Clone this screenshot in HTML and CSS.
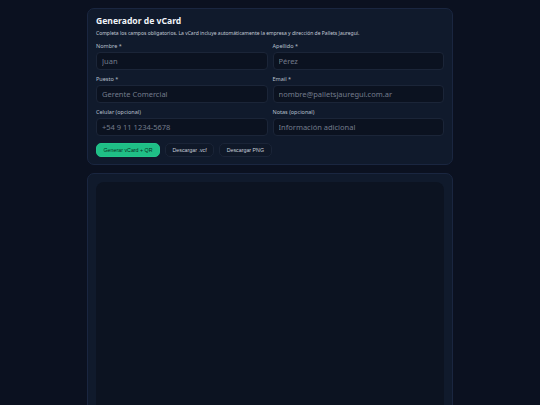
FILE: index.html
```html
<!DOCTYPE html>
<html lang="es">
<head>
<meta charset="utf-8">
<title>Generador de vCard</title>
<link rel="stylesheet" href="styles.css">
</head>
<body>
<main class="wrap">
  <section class="card form-card">
    <h1 class="title">Generador de vCard</h1>
    <p class="desc">Completa los campos obligatorios. La vCard incluye automáticamente la empresa y dirección de Pallets Jauregui.</p>
    <div class="grid">
      <label class="field"><span class="lbl">Nombre *</span><input class="inp" placeholder="Juan"></label>
      <label class="field"><span class="lbl">Apellido *</span><input class="inp" placeholder="Pérez"></label>
      <label class="field"><span class="lbl">Puesto *</span><input class="inp" placeholder="Gerente Comercial"></label>
      <label class="field"><span class="lbl">Email *</span><input class="inp" placeholder="nombre@palletsjauregui.com.ar"></label>
      <label class="field"><span class="lbl">Celular (opcional)</span><input class="inp" placeholder="+54 9 11 1234-5678"></label>
      <label class="field"><span class="lbl">Notas (opcional)</span><input class="inp" placeholder="Información adicional"></label>
    </div>
    <div class="actions">
      <button class="btn btn-primary">Generar vCard + QR</button>
      <button class="btn btn-ghost">Descargar .vcf</button>
      <button class="btn btn-ghost">Descargar PNG</button>
    </div>
  </section>
  <section class="card out-card">
    <div class="canvas"></div>
  </section>
</main>
</body>
</html>
```

FILE: styles.css
```css
* { box-sizing: border-box; }
html, body { margin: 0; padding: 0; }
body {
  background: #0b1120;
  font-family: "Noto Sans", "Open Sans", sans-serif;
  color: #e5e9f0;
}
.wrap {
  width: 366px;
  margin: 0 auto;
  padding-top: 8px;
  display: flex;
  flex-direction: column;
  gap: 8px;
}
.card {
  background: #101a2c;
  border: 1px solid #1a2640;
  border-radius: 7px;
}
.form-card {
  padding: 6px 8px 7px;
}
.title {
  margin: 0;
  font-size: 8.6px;
  line-height: 12px;
  font-weight: 700;
  color: #f1f4f8;
}
.desc {
  margin: 3px 0 0;
  font-size: 5px;
  line-height: 7px;
  color: #c3cad6;
}
.grid {
  margin-top: 6px;
  display: grid;
  grid-template-columns: 1fr 1fr;
  column-gap: 5px;
  row-gap: 6px;
}
.field {
  display: flex;
  flex-direction: column;
  gap: 2px;
}
.lbl {
  font-size: 5.5px;
  line-height: 7px;
  color: #b8c0cc;
}
.inp {
  height: 18px;
  width: 100%;
  background: #0b1220;
  border: 1px solid #1b2538;
  border-radius: 4px;
  padding: 0 5px;
  font-family: "Noto Sans", "Open Sans", sans-serif;
  font-size: 7.5px;
  color: #e5e9f0;
  outline: none;
}
.inp::placeholder { color: #737c8c; }
.actions {
  margin-top: 7px;
  display: flex;
  gap: 5px;
}
.btn {
  height: 14px;
  border-radius: 5px;
  font-family: "Liberation Sans", Arial, sans-serif;
  font-size: 5.3px;
  padding: 0 6.5px;
  white-space: nowrap;
  cursor: pointer;
}
.btn-primary {
  background: #1fbf86;
  border: 1px solid #22c48b;
  color: #0a2f22;
}
.btn-ghost {
  background: #0f1828;
  border: 1px solid #1a2437;
  color: #c7ceda;
}
.out-card {
  padding: 8px 8px 0;
}
.canvas {
  height: 330px;
  background: #0c1321;
  border-radius: 8px;
}
```
